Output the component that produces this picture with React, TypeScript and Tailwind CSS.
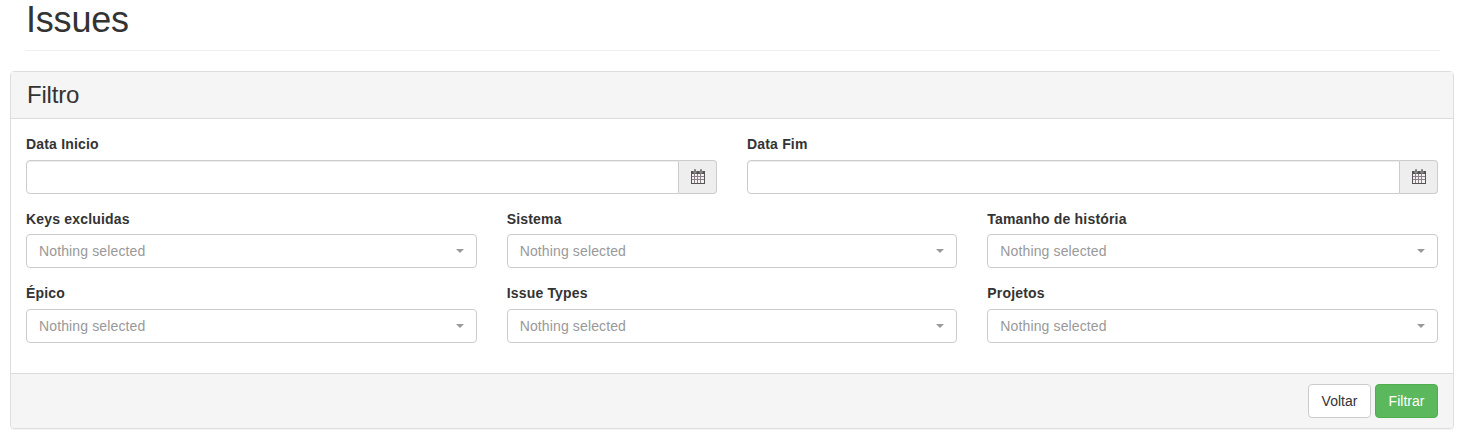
const labelClass = 'mb-[5.5px] block text-sm font-bold leading-5 tracking-[0.18px] text-[#333]'

function CalendarIcon() {
  return (
    <svg width="14" height="15" viewBox="0 0 14 15" className="block">
      <rect x="0.5" y="2.5" width="13" height="12" fill="#f4eff0" stroke="#555" />
      <rect x="0" y="2" width="14" height="3" fill="#555" />
      <path stroke="#8a8088" strokeWidth="1" d="M3.5 5v9M6.5 5v9M9.5 5v9M1 7.5h12M1 10.5h12" />
      <rect x="3" y="0" width="2" height="4" rx="0.5" fill="#555" stroke="#eee" strokeWidth="0.5" />
      <rect x="9" y="0" width="2" height="4" rx="0.5" fill="#555" stroke="#eee" strokeWidth="0.5" />
    </svg>
  )
}

function DateField({ label }: { label: string }) {
  return (
    <div className="mb-[15px]">
      <label className={labelClass}>{label}</label>
      <div className="flex h-[34px]">
        <input className="min-w-0 flex-1 rounded-l-[4px] border border-[#ccc] bg-white shadow-[inset_0_1px_1px_rgba(0,0,0,0.075)]" />
        <span className="flex w-[38px] items-center justify-center rounded-r-[4px] border border-l-0 border-[#ccc] bg-[#eee]">
          <CalendarIcon />
        </span>
      </div>
    </div>
  )
}

function SelectField({ label }: { label: string }) {
  return (
    <div className="mb-[15px]">
      <label className={labelClass}>{label}</label>
      <button className="flex h-[34px] w-full items-center justify-between rounded-[4px] border border-[#ccc] bg-white px-3 text-sm tracking-[0.13px] text-[#999]">
        <span>Nothing selected</span>
        <span className="h-0 w-0 border-x-4 border-t-4 border-x-transparent border-t-[#999]" />
      </button>
    </div>
  )
}

export default function App() {
  return (
    <div className="h-[434px] overflow-hidden bg-white font-['Liberation_Sans',Arial,sans-serif] text-sm text-[#333]">
      <div className="ml-[25px] mr-5 border-b border-[#eee] pb-2.5">
        <h1 className="h-10 pl-px text-4xl leading-10 font-normal tracking-[-0.2px]">Issues</h1>
      </div>
      <div className="ml-2.5 mr-1.5 mt-5 rounded-[4px] border border-[#ddd] shadow-[0_1px_1px_rgba(0,0,0,0.05)]">
        <div className="h-[47px] border-b border-[#ddd] bg-[#f5f5f5] pl-4 pr-[15px] text-2xl leading-[46px] tracking-[-0.2px]">Filtro</div>
        <div className="p-[15px]">
          <div className="grid grid-cols-2 gap-x-[30px]">
            <DateField label="Data Inicio" />
            <DateField label="Data Fim" />
          </div>
          <div className="grid grid-cols-3 gap-x-[30px]">
            <SelectField label="Keys excluidas" />
            <SelectField label="Sistema" />
            <SelectField label="Tamanho de história" />
            <SelectField label="Épico" />
            <SelectField label="Issue Types" />
            <SelectField label="Projetos" />
          </div>
        </div>
        <div className="flex justify-end gap-1 rounded-b-[4px] border-t border-[#ddd] bg-[#f5f5f5] px-[15px] py-2.5">
          <button className="h-[34px] w-[63px] rounded-[4px] border border-[#ccc] bg-white text-sm text-[#333]">Voltar</button>
          <button className="h-[34px] w-[63px] rounded-[4px] border border-[#4cae4c] bg-[#5cb85c] text-sm text-white">Filtrar</button>
        </div>
      </div>
    </div>
  )
}
